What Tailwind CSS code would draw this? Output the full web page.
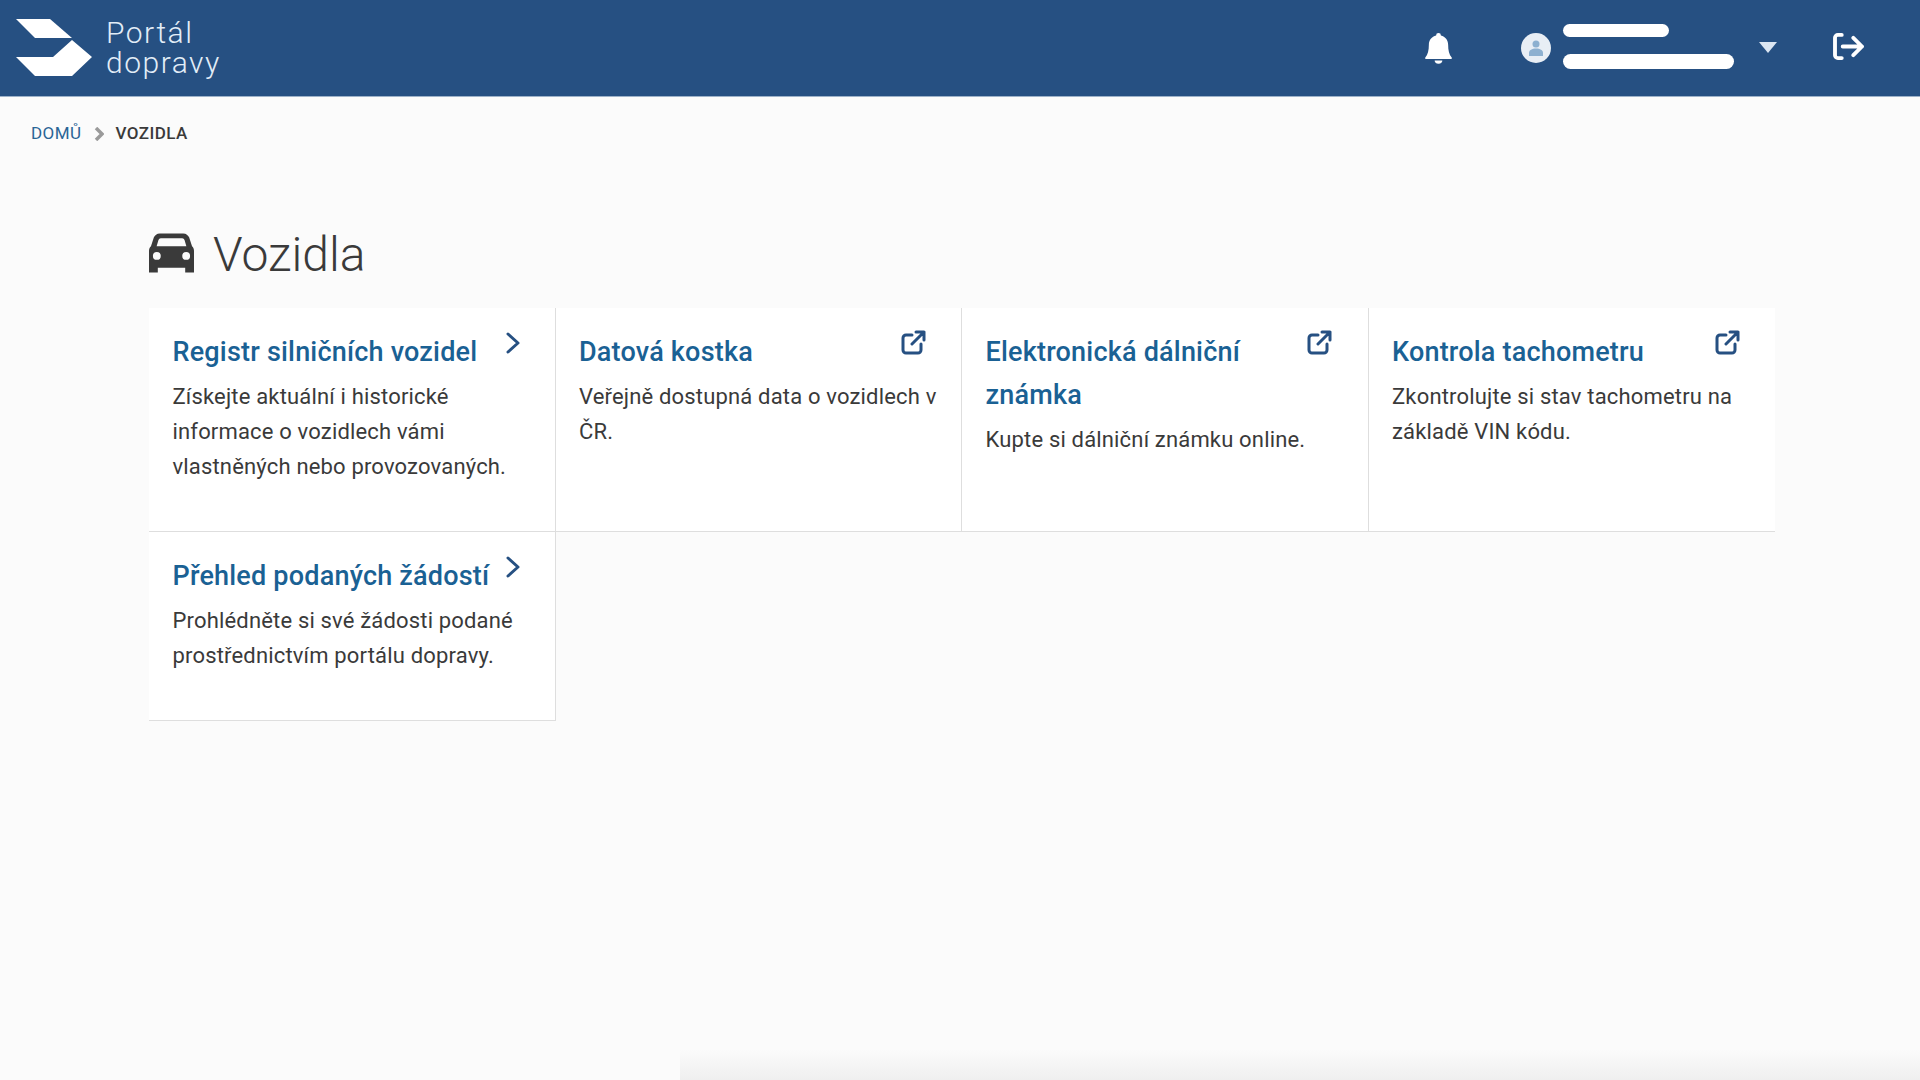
<!DOCTYPE html>
<html lang="cs"><head><meta charset="utf-8"><script src="https://cdn.jsdelivr.net/npm/@tailwindcss/browser@4"></script></head>
<body class="bg-[#fbfbfb] font-['Roboto',sans-serif] text-[#3a3a3a]">
<div class="relative w-[1920px] h-[1080px] overflow-hidden">
<header class="h-[97px] bg-[#265082] border-b border-[#9db2c9] flex items-center text-white">
  <svg class="ml-[16px] w-[76px] h-[58px] shrink-0" viewBox="0 0 76 58" fill="#fff"><path d="M0 0H34L56 19H19Z"/><path d="M56 21L76 38L56 57H19L0 38H37Z"/></svg>
  <div class="ml-[14px] text-[30px] leading-[30px] tracking-[1.5px] font-light text-[#e2edf7]"><div>Portál</div><div>dopravy</div></div>
  <div class="ml-auto flex items-center">
    <svg class="w-[27px] h-[31px] mr-[69px]" viewBox="0 0 28 32" fill="#fff"><path d="M14 0a2.500 2.500 0 0 1 2.500 2.600C21 3.700 24 7.500 24 12c0 6 1 10 3.500 13 .8 1 .3 2-.8 2H1.300c-1.100 0-1.600-1-.8-2C3 22 4 18 4 12c0-4.500 3-8.300 7.500-9.400A2.500 2.500 0 0 1 14 0ZM10 28.500h8a4 3.200 0 0 1-8 0Z"/></svg>
    <div class="mb-[1px] w-[30px] h-[30px] rounded-full bg-[#e8eef5] flex items-center justify-center"><svg class="w-[14px] h-[16px]" viewBox="0 0 14 16" fill="#8db0d0"><circle cx="7" cy="4" r="3.500"/><path d="M0 16v-3c0-3 3-4.500 7-4.500s7 1.500 7 4.500v3Z"/></svg></div>
    <div class="ml-[12px] mb-[3px] w-[172px] flex flex-col gap-[17px]"><div class="w-[106px] h-[13px] bg-white rounded-full"></div><div class="w-[171px] h-[15px] bg-white rounded-full"></div></div>
    <div class="ml-[24px] mb-[1px] w-0 h-0 border-x-[9px] border-x-transparent border-t-[11px] border-t-[#dbe6f2]"></div>
    <svg class="ml-[56px] mr-[56px] mb-[4px] w-[31px] h-[27px]" viewBox="0 0 32 28" fill="none" stroke="#fff" stroke-width="4" stroke-linecap="round" stroke-linejoin="round"><path d="M9 2H5a3 3 0 0 0-3 3v18a3 3 0 0 0 3 3h4"/><path d="M10 14h20M21 5l9 9-9 9"/></svg>
  </div>
</header>
<nav class="h-[73px] pl-[31px] flex items-center text-[17px] tracking-[.45px] font-medium">
  <span class="text-[#2a6596] font-normal">DOMŮ</span>
  <svg class="ml-[12px] mr-[12px] w-[10px] h-[14px]" viewBox="0 0 10 14" fill="none" stroke="#9a9a9a" stroke-width="3.500"><path d="M2 1l6 6-6 6"/></svg>
  <span>VOZIDLA</span>
</nav>
<main class="w-[1626px] ml-[149px]">
  <h1 class="mt-[57px] h-[81px] flex items-start text-[48px] leading-[56px] font-light"><svg class="mt-[6px] w-[45px] h-[40px] mr-[19px] shrink-0" viewBox="0 0 46 40" fill="#3a3a3a"><path fill-rule="evenodd" d="M11 0h24c3 0 5 2 6 4l3 9c1.500 1.500 2 3 2 5v22h-9v-5H9v5H0V18c0-2 .5-3.500 2-5l3-9c1-2 3-4 6-4Zm1 5c-1 0-2 .8-2.400 2l-1.800 6h30.400l-1.800-6c-.4-1.200-1.400-2-2.400-2ZM8 19a4 4 0 1 0 0 8 4 4 0 0 0 0-8Zm30 0a4 4 0 1 0 0 8 4 4 0 0 0 0-8Z"/></svg><span>Vozidla</span></h1>
  <div class="grid grid-cols-4">
    <a class="relative h-[224px] bg-white border-r border-b border-[#dedede] pl-[23.500px] pr-[20px] pt-[23px]">
      <h2 class="text-[27px] leading-[43px] tracking-[.2px] font-medium text-[#1a6194]">Registr silničních vozidel</h2>
      <p class="mt-[5px] text-[22px] leading-[35px] tracking-[.17px]">Získejte aktuální i historické informace o vozidlech vámi vlastněných nebo provozovaných.</p>
      <svg class="absolute top-[24px] left-[357px] w-[14px] h-[22px]" viewBox="0 0 14 22" fill="none" stroke="#265082" stroke-width="3" stroke-linecap="round" stroke-linejoin="round"><path d="M2 2l10 9-10 9"/></svg>
    </a>
    <a class="relative h-[224px] bg-white border-r border-b border-[#dedede] pl-[23.500px] pr-[20px] pt-[23px]">
      <h2 class="text-[27px] leading-[43px] tracking-[.2px] font-medium text-[#1a6194]">Datová kostka</h2>
      <p class="mt-[5px] text-[22px] leading-[35px] tracking-[.17px]">Veřejně dostupná data o vozidlech v ČR.</p>
      <svg class="absolute top-[22px] left-[345px] w-[25px] h-[25px]" viewBox="0 0 25 25" fill="none" stroke="#265082" stroke-width="3" stroke-linecap="round" stroke-linejoin="round"><path d="M11 5H5a3 3 0 0 0-3 3v12a3 3 0 0 0 3 3h12a3 3 0 0 0 3-3v-6M11 14L23 2M15 2h8v8"/></svg>
    </a>
    <a class="relative h-[224px] bg-white border-r border-b border-[#dedede] pl-[23.500px] pr-[80px] pt-[23px]">
      <h2 class="text-[27px] leading-[43px] tracking-[.2px] font-medium text-[#1a6194]">Elektronická dálniční známka</h2>
      <p class="mt-[5px] text-[22px] leading-[35px] tracking-[.17px] -mr-[60px]">Kupte si dálniční známku online.</p>
      <svg class="absolute top-[22px] left-[345px] w-[25px] h-[25px]" viewBox="0 0 25 25" fill="none" stroke="#265082" stroke-width="3" stroke-linecap="round" stroke-linejoin="round"><path d="M11 5H5a3 3 0 0 0-3 3v12a3 3 0 0 0 3 3h12a3 3 0 0 0 3-3v-6M11 14L23 2M15 2h8v8"/></svg>
    </a>
    <a class="relative h-[224px] bg-white border-b border-[#dedede] pl-[23.500px] pr-[20px] pt-[23px]">
      <h2 class="text-[27px] leading-[43px] tracking-[.2px] font-medium text-[#1a6194]">Kontrola tachometru</h2>
      <p class="mt-[5px] text-[22px] leading-[35px] tracking-[.17px]">Zkontrolujte si stav tachometru na základě VIN kódu.</p>
      <svg class="absolute top-[22px] left-[346px] w-[25px] h-[25px]" viewBox="0 0 25 25" fill="none" stroke="#265082" stroke-width="3" stroke-linecap="round" stroke-linejoin="round"><path d="M11 5H5a3 3 0 0 0-3 3v12a3 3 0 0 0 3 3h12a3 3 0 0 0 3-3v-6M11 14L23 2M15 2h8v8"/></svg>
    </a>
    <a class="relative h-[189px] bg-white border-r border-b border-[#dedede] pl-[23.500px] pr-[20px] pt-[23px]">
      <h2 class="text-[27px] leading-[43px] tracking-[.2px] font-medium text-[#1a6194]">Přehled podaných žádostí</h2>
      <p class="mt-[5px] text-[22px] leading-[35px] tracking-[.17px]">Prohlédněte si své žádosti podané prostřednictvím portálu dopravy.</p>
      <svg class="absolute top-[24px] left-[357px] w-[14px] h-[22px]" viewBox="0 0 14 22" fill="none" stroke="#265082" stroke-width="3" stroke-linecap="round" stroke-linejoin="round"><path d="M2 2l10 9-10 9"/></svg>
    </a>
  </div>
</main>
<div class="absolute left-[680px] right-0 bottom-0 h-[30px] bg-gradient-to-b from-[#fbfbfb] to-[#efefef]"></div>
</div>
</body></html>
